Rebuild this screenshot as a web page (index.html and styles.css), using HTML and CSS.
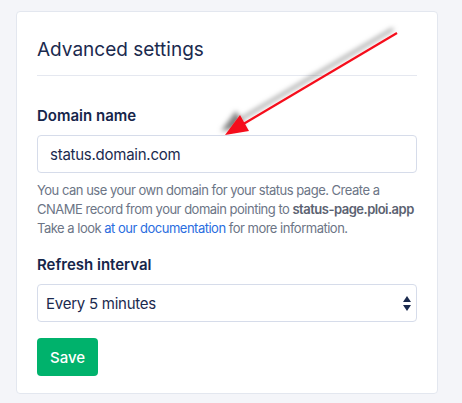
FILE: index.html
```html
<!DOCTYPE html>
<html lang="en">
<head>
    <meta charset="UTF-8">
    <meta name="viewport" content="width=device-width, initial-scale=1.0">
    <title>Advanced settings</title>
    <link rel="stylesheet" href="styles.css">
</head>
<body>

    <div class="card">
        <h2 class="card-title">Advanced settings</h2>

        <!-- Domain -->
        <div class="field">
            <label for="domain">Domain name</label>
            <input type="text" id="domain" value="status.domain.com">
            <p class="help">
                You can use your own domain for your status page. Create a<br>
                CNAME record from your domain pointing to <strong>status-page.ploi.app</strong><br>
                Take a look <a href="#">at our documentation</a> for more information.
            </p>
        </div>

        <!-- Refresh interval -->
        <div class="field">
            <label for="interval">Refresh interval</label>
            <div class="select-wrap">
                <select id="interval">
                    <option>Every 5 minutes</option>
                    <option>Every 10 minutes</option>
                    <option>Every 30 minutes</option>
                </select>
                <svg class="select-icon" width="8" height="15" viewBox="0 0 8 15">
                    <path d="M4 0 L8 6 L0 6 Z" fill="#1b2a4e"/>
                    <path d="M0 9 L8 9 L4 15 Z" fill="#1b2a4e"/>
                </svg>
            </div>
        </div>

        <button class="btn-save">Save</button>
    </div>

    <!-- annotation arrow -->
    <svg class="annotation" width="462" height="403" viewBox="0 0 462 403">
        <defs>
            <filter id="shadow" x="-20%" y="-20%" width="140%" height="140%">
                <feDropShadow dx="-4" dy="-4" stdDeviation="2.5" flood-color="#000" flood-opacity="0.5"/>
            </filter>
        </defs>
        <g filter="url(#shadow)">
            <line x1="397" y1="33" x2="240" y2="126" stroke="#f5101b" stroke-width="2.2"/>
            <polygon points="225,135 240,115 249,131" fill="#f5101b"/>
        </g>
    </svg>

</body>
</html>
```

FILE: styles.css
```css
body {
    font-family: 'Inter', 'Noto Sans', sans-serif;
    margin: 0;
    padding: 11px 0 0 16px;
    background-color: #f4f5f9;
    color: #16254a;
}

.card {
    width: 380px;
    background-color: #fff;
    border: 1px solid #e3e7ef;
    border-radius: 4px;
    padding: 24px 20px 17px 20px;
}

.card-title {
    margin: 0;
    font-size: 19px;
    font-weight: 400;
    line-height: 28px;
    color: #1b2a4e;
    padding-bottom: 11px;
    border-bottom: 1px solid #e5e8f0;
}

.field {
    margin-top: 30px;
}

.field + .field {
    margin-top: 17px;
}

label {
    display: block;
    font-size: 15px;
    font-weight: 600;
    line-height: 20px;
    margin-bottom: 9px;
    color: #16254a;
}

input, select {
    display: block;
    box-sizing: border-box;
    width: 100%;
    height: 38px;
    border: 1px solid #d6dcea;
    border-radius: 4px;
    font-family: inherit;
    font-size: 15px;
    letter-spacing: -0.25px;
    color: #1b2a4e;
    background-color: #fff;
    margin: 0;
}

input {
    padding: 0 12px;
}

.select-wrap {
    position: relative;
}

select {
    appearance: none;
    -webkit-appearance: none;
    padding: 0 30px 0 8px;
}

.select-icon {
    position: absolute;
    right: 6px;
    top: 12px;
    pointer-events: none;
}

.help {
    margin: 8px 0 0 0;
    font-size: 13px;
    line-height: 19px;
    letter-spacing: -0.5px;
    white-space: nowrap;
    color: #6c7586;
}

.help strong {
    color: #5b6271;
    font-weight: 600;
}

.help a {
    color: #2a6de0;
    text-decoration: none;
}

.btn-save {
    display: block;
    margin-top: 16px;
    height: 38px;
    width: 61px;
    padding: 0;
    border: none;
    border-radius: 4px;
    background-color: #00b26c;
    color: #fff;
    font-family: inherit;
    font-size: 15px;
    font-weight: 500;
    cursor: pointer;
}

.btn-save:hover {
    background-color: #009a5d;
}

.annotation {
    position: absolute;
    left: 0;
    top: 0;
    pointer-events: none;
}
```
